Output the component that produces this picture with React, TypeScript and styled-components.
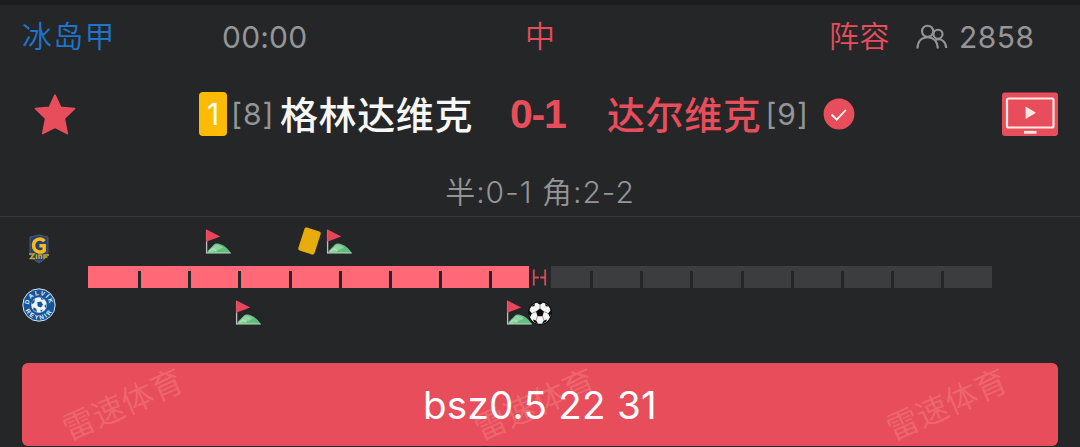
import React from 'react';
import styled, {createGlobalStyle} from "styled-components";

const red = "#e84d5b";
const grey = "#949596";

type EventType = {
    kind: "corner" | "card" | "goal";
    x: number;
}

const homeEvents: EventType[] = [
    {kind: "corner", x: 205},
    {kind: "card", x: 297},
    {kind: "corner", x: 326},
];
const awayEvents: EventType[] = [
    {kind: "corner", x: 235},
    {kind: "corner", x: 506},
    {kind: "goal", x: 528},
];
const ticks = [0, 1, 2, 3, 4, 5, 6, 7];

const Corner = () => (
    <svg width="27" height="26" viewBox="0 0 27 26">
        <path d="M2.5 24V22L9 15.5Q10.5 14 13 14.6C18 15.6 23 19 25.5 24Z" fill="#62bd7d"/>
        <path d="M3 23.5L10 15.5C13 15 16.5 16.5 18 18.5L10 22.5Z" fill="#8fd3a4"/>
        <path d="M4 22.5Q9 17 11 22.5" fill="none" stroke="#c9ecd2" strokeWidth="0.8"/>
        <path d="M1.5 24H25.8" stroke="#b9dcc2" strokeWidth="1"/>
        <path d="M1.6 1V24.5" stroke="#c3bcc0" strokeWidth="1.3"/>
        <path d="M1.2 0.3L15.2 7.4L1.2 12.8Z" fill="#e84558"/>
    </svg>
);

const Ball = () => (
    <svg width="24" height="24" viewBox="0 0 24 24">
        <circle cx="12" cy="12" r="11.4" fill="#f5f5f5" stroke="#0b0b0b" strokeWidth="1.1"/>
        <path d="M12 7.6L16 10.6L14.5 15.2H9.5L8 10.6Z" fill="#0b0b0b"/>
        <path d="M8.4 1.6Q12 0.2 15.6 1.6L12 3.8ZM23 9Q23.6 13 21.9 16L20 12.4ZM18.4 20.6Q16 22.4 13.8 22.9L15.8 19.4L18.8 18.6ZM5.6 20.6Q8 22.4 10.2 22.9L8.2 19.4L5.2 18.6ZM1 9Q0.4 13 2.1 16L4 12.4ZM3.4 5.6Q4.7 3.6 6.8 2.4L6.4 5.2ZM20.6 5.6Q19.3 3.6 17.2 2.4L17.6 5.2Z" fill="#0b0b0b"/>
        <path d="M12 3.5V8M8 10.6L4 12.4M16 10.6L20 12.4M9.5 15.2L8 19.4M14.5 15.2L16 19.4" stroke="#555" strokeWidth="0.6"/>
    </svg>
);

const HomeLogo = () => (
    <svg width="22" height="30" viewBox="0 0 22 30">
        <path d="M2 3L11 1L20 3V17C20 23 16 26 11 29C6 26 2 23 2 17Z" fill="#263f78" stroke="#5a6275" strokeWidth="0.8"/>
        <path d="M16.5 7.2C13 3.2 5.6 5 5.6 11.6C5.6 18 13 19.5 16.2 16.6V11.8H11.4" fill="none" stroke="#f4bd10" strokeWidth="3.5"/>
        <path d="M1 20H6L2.5 24.5H7M8.5 20.5V25M11 25V21H13.5V25M16 25V21H21M16 23H19.5" fill="none" stroke="#c6a52b" strokeWidth="1.5"/>
        <path d="M8 27H14" stroke="#315797" strokeWidth="1.4"/>
    </svg>
);

const AwayLogo = () => (
    <svg width="34" height="34" viewBox="0 0 34 34">
        <defs>
            <path id="arcTop" d="M7 17A10 10 0 0 1 27 17"/>
            <path id="arcBottom" d="M2.5 17A14.5 14.5 0 0 0 31.5 17"/>
        </defs>
        <circle cx="17" cy="17" r="16.2" fill="#14559c" stroke="#d9e6f1" strokeWidth="1"/>
        <LogoText $spacing={1.4}><textPath href="#arcTop" startOffset="50%">DALVÍK</textPath></LogoText>
        <LogoText $spacing={1.8}><textPath href="#arcBottom" startOffset="50%">REYNIR</textPath></LogoText>
        <circle cx="17" cy="17" r="7.8" fill="#edf4fa"/>
        <path d="M15.2 14.3L19 13.6L21 16.4L19 19.4L15.6 18.3ZM10 13.4L13 11L12.4 14.6L9.6 16.6ZM18.6 9.6L22 11.2L19.6 12ZM24.4 16L24 20L22.2 18ZM11.6 19.2L14.4 21L14.8 24.2L11.2 21.8ZM18.4 22L21 21.6L19 24.2Z" fill="#14559c"/>
    </svg>
);

const renderEvent = (e: EventType) => (
    <Marker key={e.kind + e.x} $x={e.x}>
        {e.kind === "corner" && <Corner/>}
        {e.kind === "card" && <Card/>}
        {e.kind === "goal" && <Ball/>}
    </Marker>
);

const App = () => {
    return (
        <Page>
            <GlobalStyle/>
            <Header>
                <League>冰岛甲</League>
                <Time>00:00</Time>
                <Neutral>中</Neutral>
                <Lineup>阵容</Lineup>
                <Viewers>
                    <svg width="32" height="26" viewBox="0 0 32 26" fill="none" stroke={grey} strokeWidth="2.1">
                        <circle cx="11.6" cy="7.3" r="5.6"/>
                        <path d="M1.4 24.5C1.7 17 6 13.2 11.6 13.2C17.2 13.2 21.4 17 21.8 24.5"/>
                        <circle cx="22" cy="10.2" r="4.5"/>
                        <path d="M19.6 15.8C25.4 13.8 29.8 17.5 30.2 24"/>
                    </svg>
                    <Count>2858</Count>
                </Viewers>
            </Header>
            <Match>
                <Star width="44" height="42" viewBox="0 0 44 42">
                    <path d="M22 2L27.7 14.3L41.5 15.6L31.3 25.4L34.3 40.6L22 34.2L9.7 40.6L12.7 25.4L2.5 15.6L16.3 14.3Z" fill={red} stroke={red} strokeWidth="1.6" strokeLinejoin="round"/>
                </Star>
                <Home>
                    <RedCards>1</RedCards>
                    <Rank>[8]</Rank>
                    <Team $color="#f7f7f7">格林达维克</Team>
                </Home>
                <Score>0-1</Score>
                <Away>
                    <Team $color={red}>达尔维克</Team>
                    <AwayRank>[9]</AwayRank>
                    <Check width="32" height="32" viewBox="0 0 32 32">
                        <circle cx="16" cy="16" r="15.4" fill={red}/>
                        <path d="M8.5 16.5L13.7 21.6L22.8 12" fill="none" stroke="#fff" strokeWidth="1.8"/>
                    </Check>
                </Away>
                <svg width="56" height="44" viewBox="0 0 56 44">
                    <rect y="0.5" width="56" height="43.5" rx="3" fill={red}/>
                    <rect x="5" y="6.5" width="46.5" height="29" rx="1.5" fill="none" stroke="#ffe9e7" strokeWidth="2.2"/>
                    <path d="M23.6 14.5L34 20.8L23.6 27.1Z" fill="#ffe9e7"/>
                    <path d="M22 40.3H34.5" stroke="#ffe9e7" strokeWidth="2.8"/>
                </svg>
            </Match>
            <Stats>半:0-1 角:2-2</Stats>
            <Timeline>
                <Logos>
                    <HomeLogo/>
                    <AwayLogo/>
                </Logos>
                <Tracks>
                    <Events>{homeEvents.map(renderEvent)}</Events>
                    <Bar>
                        <Half $color="#ff6877" $first={50}>{ticks.map(t => <Tick key={t}/>)}</Half>
                        <HalfMark width="22" height="22" viewBox="0 0 22 22">
                            <path d="M4.8 3.5V19.5M16.2 3.5V19.5M4.8 11.5H9.8M11.4 11.5H16.2" stroke="#d94b5a" strokeWidth="1.8"/>
                        </HalfMark>
                        <Half $color="#3c3d3f" $first={39}>{ticks.map(t => <Tick key={t}/>)}</Half>
                    </Bar>
                    <Events>{awayEvents.map(renderEvent)}</Events>
                </Tracks>
            </Timeline>
            <Banner>
                <Watermark $x={101}>雷速体育</Watermark>
                <Watermark $x={513}>雷速体育</Watermark>
                <Watermark $x={925}>雷速体育</Watermark>
                <BannerText>bsz0.5 22 31</BannerText>
            </Banner>
        </Page>
    );
};

export default App;

const GlobalStyle = createGlobalStyle`
    * {
        box-sizing: border-box;
    }
    body {
        margin: 0;
        background-color: #252628;
        font-family: Inter, "Noto Sans CJK SC", sans-serif;
    }
    svg {
        display: block;
        flex-shrink: 0;
    }
`
const Page = styled.div`
    width: 1080px;
    height: 447px;
    overflow: hidden;
    background-color: #252628;
    border-top: 5px solid #1b1c1e;
    white-space: nowrap;
`
const Header = styled.div`
    display: grid;
    grid-template-columns: 200px 303px 304px 87px 1fr;
    align-items: center;
    height: 64px;
    padding-left: 22px;
    font-size: 30px;
    font-weight: 350;
    line-height: 40px;
`
const League = styled.span`
    color: #1f74cb;
    letter-spacing: 1.2px;
    padding-bottom: 2px;
`
const Time = styled.span`
    color: ${grey};
    font-weight: 400;
    letter-spacing: 0.2px;
    padding-bottom: 1px;
`
const Neutral = styled.span`
    color: ${red};
    padding-bottom: 2px;
`
const Lineup = styled.span`
    color: ${red};
    letter-spacing: 0.5px;
    padding-bottom: 2px;
`
const Viewers = styled.div`
    display: flex;
    align-items: center;
    gap: 11px;
    color: ${grey};
`
const Count = styled.span`
    font-weight: 400;
    letter-spacing: 0.5px;
    padding-bottom: 1px;
`
const Match = styled.div`
    display: grid;
    grid-template-columns: 166px 311px 97px 395px 56px;
    align-items: center;
    height: 90px;
    padding-left: 33px;
`
const Star = styled.svg`
`
const Home = styled.div`
    display: flex;
    align-items: center;
`
const RedCards = styled.span`
    width: 28px;
    height: 44px;
    margin-right: 4px;
    border-radius: 4px;
    background-color: #fdbb06;
    color: #fff;
    font-size: 30px;
    line-height: 44px;
    text-align: center;
`
const Rank = styled.span`
    color: ${grey};
    font-size: 30px;
    line-height: 40px;
    letter-spacing: 1px;
    width: 49px;
`
const AwayRank = styled(Rank)`
    margin-left: 4px;
`
const Team = styled.span<{$color: string}>`
    color: ${props => props.$color};
    font-size: 38px;
    font-weight: 500;
    line-height: 50px;
    letter-spacing: 0.6px;
    padding-top: 1px;
`
const Score = styled.span`
    color: ${red};
    font-family: "Liberation Sans", sans-serif;
    font-size: 41px;
    font-weight: 700;
    letter-spacing: -1.2px;
`
const Away = styled.div`
    display: flex;
    align-items: center;
`
const Check = styled.svg`
    margin-left: 9px;
`
const Stats = styled.div`
    height: 58px;
    border-bottom: 1px solid #39393c;
    color: ${grey};
    font-size: 30px;
    font-weight: 350;
    line-height: 66px;
    letter-spacing: 1px;
    text-align: center;
`
const Timeline = styled.div`
    display: flex;
    height: 146px;
`
const Logos = styled.div`
    display: flex;
    flex-direction: column;
    align-items: center;
    gap: 24px;
    width: 77px;
    margin-right: -77px;
    padding-top: 17px;
`
const LogoText = styled.text<{$spacing: number}>`
    fill: #e5f0f8;
    font-family: "Liberation Sans", sans-serif;
    font-size: 6.2px;
    font-weight: 700;
    text-anchor: middle;
    letter-spacing: ${props => props.$spacing}px;
`
const Tracks = styled.div`
    width: 1080px;
    flex-shrink: 0;
    padding-top: 9px;
`
const Events = styled.div`
    position: relative;
    height: 40px;
`
const Marker = styled.div<{$x: number}>`
    position: absolute;
    left: ${props => props.$x}px;
    top: 3px;
    height: 26px;
    display: flex;
    align-items: center;
`
const Card = styled.div`
    width: 17px;
    height: 24px;
    margin-left: 4px;
    margin-bottom: 3px;
    border-radius: 2px;
    background-color: #e8ac0c;
    transform: rotate(18deg);
`
const Bar = styled.div`
    display: flex;
    height: 22px;
    margin-left: 88px;
    margin-bottom: 9px;
`
const Half = styled.div<{$color: string, $first: number}>`
    display: flex;
    align-items: flex-end;
    gap: 47.2px;
    width: 441px;
    padding-left: ${props => props.$first}px;
    background-color: ${props => props.$color};
`
const Tick = styled.i`
    width: 3px;
    height: 17px;
    background-color: #252628;
    flex-shrink: 0;
`
const HalfMark = styled.svg`
`
const Banner = styled.div`
    position: relative;
    display: flex;
    align-items: center;
    justify-content: center;
    height: 83px;
    margin: 0 22px;
    border-radius: 6px;
    background-color: ${red};
`
const Watermark = styled.span<{$x: number}>`
    position: absolute;
    left: ${props => props.$x - 64}px;
    top: 26px;
    width: 128px;
    color: rgba(255, 190, 185, 0.22);
    font-size: 32px;
    line-height: 32px;
    text-align: center;
    transform: rotate(-24deg);
`
const BannerText = styled.span`
    position: relative;
    color: #fff;
    font-size: 38.5px;
    font-weight: 400;
    letter-spacing: 0.3px;
`
